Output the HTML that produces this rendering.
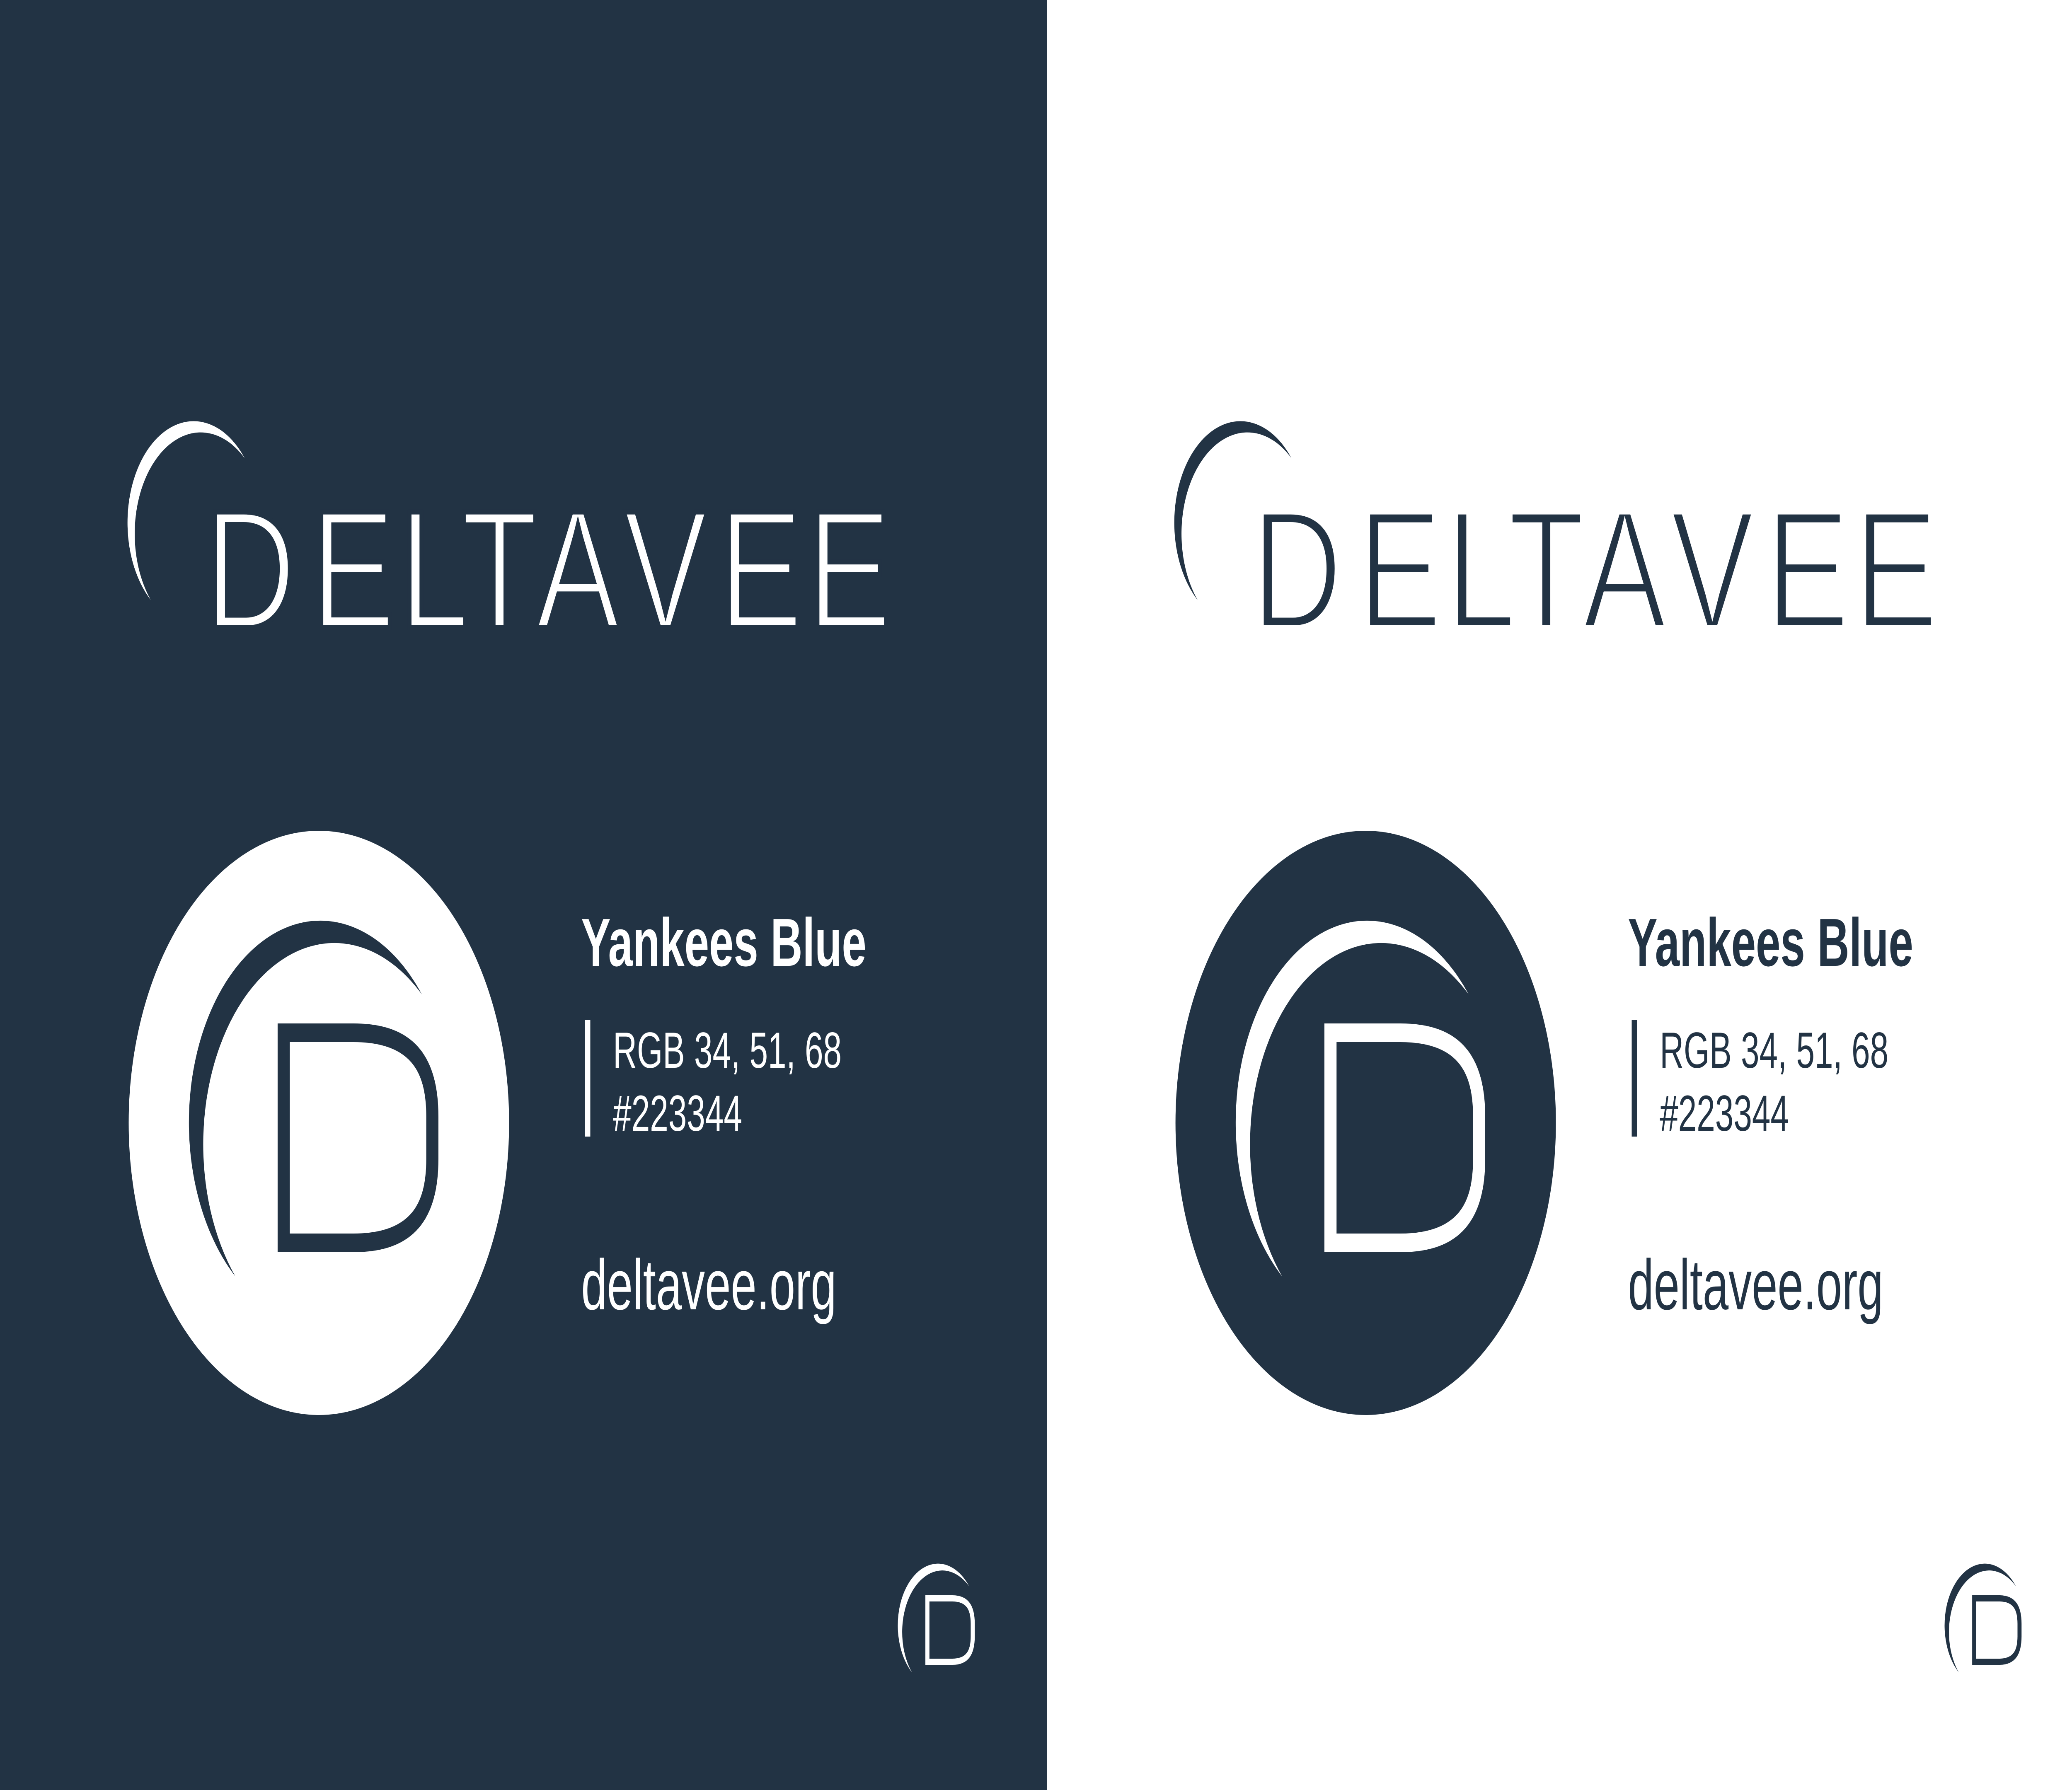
<!DOCTYPE html>
<html><head><meta charset="utf-8"><style>
html,body{margin:0;padding:0;width:100vw;height:100vh;overflow:hidden;background:#fff}
svg{display:block;width:100vw;height:100vh}
text{font-family:"Liberation Sans",sans-serif}
</style></head><body>
<svg viewBox="0 0 7680 4320" preserveAspectRatio="none" xmlns="http://www.w3.org/2000/svg">
<rect x="0" y="0" width="3880" height="4320" fill="#223344"/>
<rect x="3880" y="0" width="3800" height="4320" fill="#ffffff"/>

<!-- LEFT (dark) -->
<g>
  <path transform="translate(718,1262) scale(2.45)" fill="#fff" d="M77.1,-63.7 A100,100 0 1 0 -64.9,76 A99.8,99.8 0 0 1 77.1,-63.7Z"/>
  <g font-size="406" fill="#fff" stroke="#223344" stroke-width="12">
    <text transform="translate(759,1515) scale(1.15,1)">D</text>
    <text transform="translate(1153,1515) scale(1.15,1)">E</text>
    <text transform="translate(1480,1515) scale(1.15,1)">L</text>
    <text transform="translate(1709,1515) scale(1.15,1)">T</text>
    <text transform="translate(1986,1515) scale(1.15,1)">A</text>
    <text transform="translate(2311,1515) scale(1.15,1)">V</text>
    <text transform="translate(2664,1515) scale(1.15,1)">E</text>
    <text transform="translate(2992,1515) scale(1.15,1)">E</text>
  </g>
  <circle cx="1182" cy="2710" r="705" fill="#fff"/>
  <path transform="translate(1188,2710) scale(4.87)" fill="#223344" d="M77.1,-63.7 A100,100 0 1 0 -64.9,76 A99.8,99.8 0 0 1 77.1,-63.7Z"/>
  <path fill="none" stroke="#223344" stroke-width="45" d="M1051.5,2492.5 H1310.5 C1529.5,2492.5 1602.5,2568.5 1602.5,2695.3 V2796.7 C1602.5,2923.5 1529.5,2999.5 1310.5,2999.5 H1051.5 Z"/>
  <text x="2154" y="2331" font-size="164" font-weight="bold" fill="#fff">Yankees Blue</text>
  <rect x="2168" y="2462" width="20" height="281" fill="#fff"/>
  <text x="2272" y="2577" font-size="123" fill="#fff">RGB 34, 51, 68</text>
  <text x="2272" y="2729" font-size="123" fill="#fff">#223344</text>
  <text x="2154" y="3160" font-size="172" fill="#fff">deltavee.org</text>
  <path transform="translate(3477,3923) scale(1.49)" fill="#fff" d="M77.1,-63.7 A100,100 0 1 0 -64.9,76 A99.8,99.8 0 0 1 77.1,-63.7Z"/>
  <path fill="none" stroke="#fff" stroke-width="15" d="M3437.5,3857.5 H3529.9 C3586.6,3857.5 3605.5,3880.5 3605.5,3918.7 V3949.3 C3605.5,3987.5 3586.6,4010.5 3529.9,4010.5 H3437.5 Z"/>
</g>

<!-- RIGHT (light) -->
<g transform="translate(3880,0)">
  <path transform="translate(718,1262) scale(2.45)" fill="#223344" d="M77.1,-63.7 A100,100 0 1 0 -64.9,76 A99.8,99.8 0 0 1 77.1,-63.7Z"/>
  <g font-size="406" fill="#223344" stroke="#ffffff" stroke-width="12">
    <text transform="translate(759,1515) scale(1.15,1)">D</text>
    <text transform="translate(1153,1515) scale(1.15,1)">E</text>
    <text transform="translate(1480,1515) scale(1.15,1)">L</text>
    <text transform="translate(1709,1515) scale(1.15,1)">T</text>
    <text transform="translate(1986,1515) scale(1.15,1)">A</text>
    <text transform="translate(2311,1515) scale(1.15,1)">V</text>
    <text transform="translate(2664,1515) scale(1.15,1)">E</text>
    <text transform="translate(2992,1515) scale(1.15,1)">E</text>
  </g>
  <circle cx="1182" cy="2710" r="705" fill="#223344"/>
  <path transform="translate(1188,2710) scale(4.87)" fill="#fff" d="M77.1,-63.7 A100,100 0 1 0 -64.9,76 A99.8,99.8 0 0 1 77.1,-63.7Z"/>
  <path fill="none" stroke="#fff" stroke-width="45" d="M1051.5,2492.5 H1310.5 C1529.5,2492.5 1602.5,2568.5 1602.5,2695.3 V2796.7 C1602.5,2923.5 1529.5,2999.5 1310.5,2999.5 H1051.5 Z"/>
  <text x="2154" y="2331" font-size="164" font-weight="bold" fill="#223344">Yankees Blue</text>
  <rect x="2168" y="2462" width="20" height="281" fill="#223344"/>
  <text x="2272" y="2577" font-size="123" fill="#223344">RGB 34, 51, 68</text>
  <text x="2272" y="2729" font-size="123" fill="#223344">#223344</text>
  <text x="2154" y="3160" font-size="172" fill="#223344">deltavee.org</text>
  <path transform="translate(3477,3923) scale(1.49)" fill="#223344" d="M77.1,-63.7 A100,100 0 1 0 -64.9,76 A99.8,99.8 0 0 1 77.1,-63.7Z"/>
  <path fill="none" stroke="#223344" stroke-width="15" d="M3437.5,3857.5 H3529.9 C3586.6,3857.5 3605.5,3880.5 3605.5,3918.7 V3949.3 C3605.5,3987.5 3586.6,4010.5 3529.9,4010.5 H3437.5 Z"/>
</g>
</svg>
</body></html>
